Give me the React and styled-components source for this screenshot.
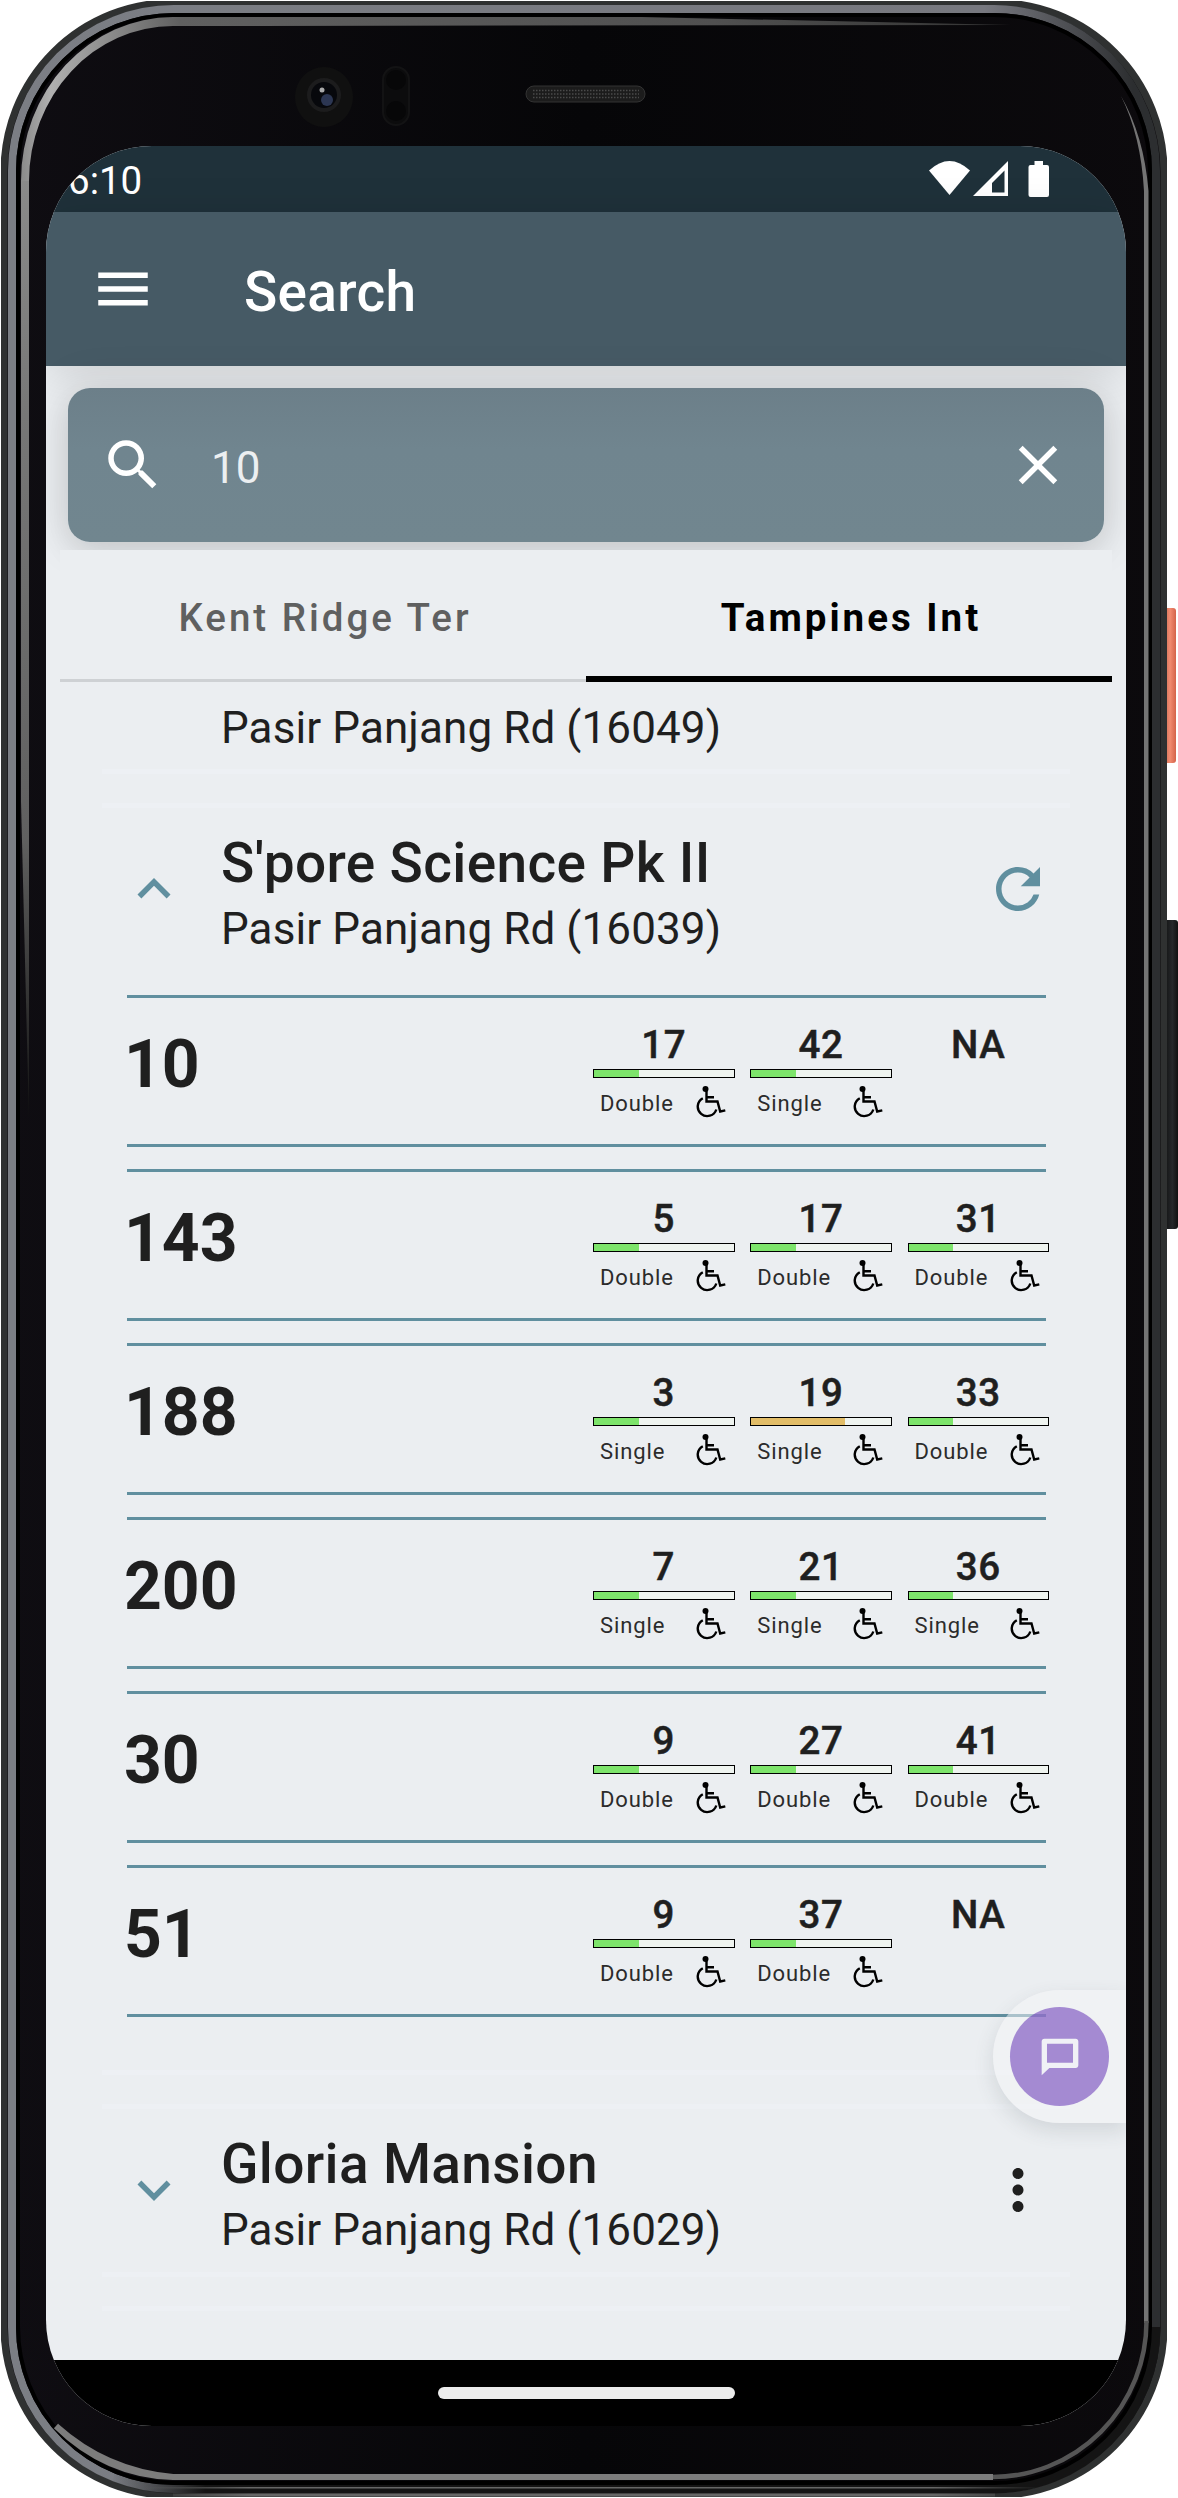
import React from "react";
import styled, { createGlobalStyle } from "styled-components";

const Global = createGlobalStyle`
  * { box-sizing: border-box; }
  body { margin: 0; background: #fff; font-family: Roboto, "Liberation Sans", sans-serif; color: #1f1f1f; }
  svg { display: block; flex: none; }
`;

const Stage = styled.div`
  position: relative;
  width: 1178px;
  height: 2498px;
  padding: 1px;
  overflow: hidden;
`;

const SideKey = styled.div`
  position: absolute;
  left: ${(p) => p.$x}px;
  top: ${(p) => p.$y}px;
  width: ${(p) => p.$w}px;
  height: ${(p) => p.$h}px;
  border-radius: 0 3px 3px 0;
  background: ${(p) => p.$fill};
`;

const Shell = styled.div`
  position: relative;
  width: 1166px;
  height: 2496px;
  padding: 145px 41px 71px 45px;
  border-radius: 172px;
  background: linear-gradient(90deg, #0f0d12, #060608 50%, #0c0a0d);
`;

const Rims = styled.svg`
  position: absolute;
  inset: 0;
`;

const Screen = styled.div`
  position: relative;
  width: 1080px;
  height: 2280px;
  border-radius: 106px;
  overflow: hidden;
  display: flex;
  flex-direction: column;
  background: #ebeef1;
`;

const StatusBar = styled.div`
  flex: none;
  height: 66px;
  padding: 0 75px 0 22px;
  display: flex;
  align-items: center;
  background: #1f313a;
  color: #fff;
  font-size: 38.5px;
`;

const Clock = styled.span`
  flex: 1;
  line-height: 64px;
  padding-top: 4px;
`;

const AppBar = styled.header`
  flex: none;
  height: 154px;
  padding-left: 44px;
  display: flex;
  align-items: center;
  gap: 88px;
  background: #465a65;
  color: #fff;
  box-shadow: 0 4px 40px rgba(0, 0, 0, 0.12);
`;

const AppTitle = styled.h1`
  margin: 0;
  padding-top: 5px;
  font-size: 55px;
  font-weight: 500;
  line-height: 64px;
  letter-spacing: 0.3px;
`;

const SearchZone = styled.div`
  flex: none;
  height: 184px;
  padding: 22px 22px 0;
`;

const SearchBox = styled.div`
  height: 154px;
  border-radius: 22px;
  padding: 0 33px 0 32px;
  display: flex;
  align-items: center;
  background: linear-gradient(#6c7f89, #70858f 40%, #71868f);
  box-shadow: 0 0 44px 2px rgba(0, 0, 0, 0.13), 0 14px 30px rgba(0, 0, 0, 0.07);
  color: #fff;
`;

const Query = styled.span`
  flex: 1;
  margin-left: 45px;
  padding-top: 6px;
  font-size: 44px;
  color: #eceff1;
`;

const Tabs = styled.div`
  position: relative;
  flex: none;
  height: 132px;
  margin: 0 14px;
  display: flex;
  background: #ebeef1;
`;

const Tab = styled.div`
  flex: 1;
  padding: 43px 0 0 4px;
  text-align: center;
  font-size: 38.5px;
  line-height: 50px;
  font-weight: ${(p) => (p.$active ? 700 : 500)};
  letter-spacing: 3px;
  color: ${(p) => (p.$active ? "#000" : "#5f6060")};
  border-bottom: ${(p) => (p.$active ? "6px solid #000" : "3px solid #ced1d4")};
`;

const Content = styled.main`
  flex: 1;
  min-height: 0;
  overflow: hidden;
  padding: 0 56px;
`;

const Item = styled.section`
  height: ${(p) => p.$h}px;
  margin-bottom: 29px;
  padding-top: ${(p) => p.$top || 0}px;
  border-top: ${(p) => (p.$first ? 0 : 5)}px solid #edf0f4;
  border-bottom: 5px solid #edf0f4;
`;

const StopHead = styled.div`
  display: flex;
  align-items: flex-start;
  padding: 0 19px;

  > svg {
    margin-top: 27px;
  }
`;

const StopText = styled.div`
  flex: 1;
  margin: 1px 0 0 34px;
`;

const StopName = styled.h2`
  margin: 0 0 2px;
  font-size: 55px;
  line-height: 66px;
  font-weight: 500;
  letter-spacing: 0.35px;
  white-space: nowrap;
`;

const StopRoad = styled.div`
  font-size: 44px;
  line-height: 62px;
  letter-spacing: 0.1px;
  white-space: nowrap;
  padding-left: ${(p) => (p.$indent ? 119 : 0)}px;
`;

const Services = styled.div`
  display: flex;
  flex-direction: column;
  gap: 22px;
  margin: 35px 24px 0 25px;
`;

const Service = styled.div`
  height: 152px;
  border-top: 3px solid #608f9f;
  border-bottom: 3px solid #608f9f;
  display: flex;
`;

const BusNo = styled.div`
  width: 469px;
  flex: none;
  margin-left: -3px;
  padding-top: 27px;
  font-size: 66px;
  line-height: 80px;
  font-weight: 700;
`;

const Arrivals = styled.div`
  display: flex;
  gap: 15.75px;
`;

const Arrival = styled.div`
  width: 141.5px;
  flex: none;
`;

const Minutes = styled.div`
  padding-top: 24px;
  height: 71px;
  text-align: center;
  font-size: 38.5px;
  line-height: 46px;
  font-weight: 500;
  letter-spacing: 0.6px;
  -webkit-text-stroke: 0.5px currentColor;
`;

const LoadBar = styled.div`
  height: 9px;
  border: 1px solid #000;
  background: #eff4f0;
`;

const LoadFill = styled.div`
  height: 100%;
  background: ${(p) => p.$color};
`;

const BusInfo = styled.div`
  display: flex;
  align-items: flex-start;
  justify-content: space-between;
  padding: 8px 9px 0 7px;
  font-size: 22px;
  letter-spacing: 0.9px;
  line-height: 35px;
  color: #2b2b2b;
`;

const Chat = styled.div`
  position: absolute;
  right: 0;
  top: 1844px;
  width: 133px;
  height: 133px;
  padding: 17px;
  border-radius: 67px 0 0 67px;
  background: rgba(245, 245, 247, 0.5);
  box-shadow: 0 8px 20px rgba(60, 70, 80, 0.14);
`;

const ChatButton = styled.div`
  width: 99px;
  height: 99px;
  border-radius: 50%;
  display: grid;
  place-items: center;
  background: rgba(108, 62, 186, 0.58);
`;

const NavBar = styled.div`
  flex: none;
  height: 66px;
  display: flex;
  justify-content: center;
  padding-top: 27px;
  background: #000;
`;

const HomePill = styled.div`
  width: 297px;
  height: 12px;
  border-radius: 6px;
  background: #ececec;
`;

const MenuIcon = () => (
  <svg width="66" height="66" viewBox="0 0 24 24" fill="#fff">
    <path d="M3 18h18v-2H3v2zm0-5h18v-2H3v2zm0-7v2h18V6H3z" />
  </svg>
);
const SearchIcon = () => (
  <svg width="66" height="66" viewBox="0 0 24 24" fill="#fff">
    <path d="M15.5 14h-.79l-.28-.27A6.47 6.47 0 0 0 16 9.5 6.5 6.5 0 1 0 9.5 16c1.61 0 3.09-.59 4.23-1.57l.27.28v.79l5 4.99L20.49 19l-4.99-5zm-6 0C7.01 14 5 11.99 5 9.5S7.01 5 9.5 5 14 7.01 14 9.5 11.99 14 9.5 14z" />
  </svg>
);
const CloseIcon = () => (
  <svg width="66" height="66" viewBox="0 0 24 24" fill="#fff">
    <path d="M19 6.41L17.59 5 12 10.59 6.41 5 5 6.41 10.59 12 5 17.59 6.41 19 12 13.41 17.59 19 19 17.59 13.41 12z" />
  </svg>
);
const Chevron = ({ up }) => (
  <svg width="66" height="66" viewBox="0 0 24 24" fill="#608f9f">
    {up ? (
      <path d="M12 8l-6 6 1.41 1.41L12 10.83l4.59 4.58L18 14z" />
    ) : (
      <path d="M16.59 8.59L12 13.17 7.41 8.59 6 10l6 6 6-6z" />
    )}
  </svg>
);
const RefreshIcon = () => (
  <svg width="66" height="66" viewBox="0 0 24 24" fill="#608f9f">
    <path d="M17.65 6.35A7.958 7.958 0 0 0 12 4c-4.42 0-7.99 3.58-7.99 8s3.57 8 7.99 8c3.73 0 6.84-2.55 7.73-6h-2.08A5.99 5.99 0 0 1 12 18c-3.31 0-6-2.69-6-6s2.69-6 6-6c1.66 0 3.14.69 4.22 1.78L13 11h7V4l-2.35 2.35z" />
  </svg>
);
const MoreIcon = () => (
  <svg width="66" height="66" viewBox="0 0 24 24" fill="#1f1f1f">
    <path d="M12 8c1.1 0 2-.9 2-2s-.9-2-2-2-2 .9-2 2 .9 2 2 2zm0 2c-1.1 0-2 .9-2 2s.9 2 2 2 2-.9 2-2-.9-2-2-2zm0 6c-1.1 0-2 .9-2 2s.9 2 2 2 2-.9 2-2-.9-2-2-2z" />
  </svg>
);
const ChatIcon = () => (
  <svg width="44" height="44" viewBox="0 0 24 24" fill="#f0f1f6">
    <path fillRule="evenodd" d="M20.500 2H3.500C2.600 2 2 2.700 2 3.500V22l4.200-4H20.500c.9 0 1.500-.7 1.500-1.500v-13C22 2.700 21.400 2 20.500 2zM4.900 4.800H19.100V15.200H4.900z" />
  </svg>
);
const Wheelchair = () => (
  <svg width="30" height="32" viewBox="0 0 30 32" fill="none" stroke="#000" strokeWidth="2.400">
    <circle cx="9.500" cy="3" r="3" fill="#000" stroke="none" />
    <path d="M10.500 4V15.500H21.500L24.200 25.500 29.300 24.300M10.500 11.200H18" />
    <path d="M6.800 12.200A9.500 9.500 0 1 0 20.300 23.500" />
  </svg>
);
const StatusIcons = () => (
  <svg width="122" height="42" viewBox="0 0 122 42" fill="#fff">
    <path d="M0 12.500Q20.500-6.500 41 12.500L20.500 37z" />
    <path fillRule="evenodd" d="M44 38L79 3V38zM63 34.500H75.500V12.500L63 25z" />
    <path d="M105.500 3h8.500v4h4q2 0 2 2v28q0 2-2 2h-16.500q-2 0-2-2V9q0-2 2-2h4z" />
  </svg>
);

const LOADS = {
  low: { color: "#7de46b", width: "32%" },
  mid: { color: "#e2bd68", width: "67%" },
};

const SERVICES = [
  ["10", [[17, "Double"], [42, "Single"], null]],
  ["143", [[5, "Double"], [17, "Double"], [31, "Double"]]],
  ["188", [[3, "Single"], [19, "Single", "mid"], [33, "Double"]]],
  ["200", [[7, "Single"], [21, "Single"], [36, "Single"]]],
  ["30", [[9, "Double"], [27, "Double"], [41, "Double"]]],
  ["51", [[9, "Double"], [37, "Double"], null]],
];

function ArrivalCell({ bus }) {
  if (!bus) return <Arrival><Minutes>NA</Minutes></Arrival>;
  const [mins, deck, load = "low"] = bus;
  return (
    <Arrival>
      <Minutes>{mins}</Minutes>
      <LoadBar>
        <LoadFill $color={LOADS[load].color} style={{ width: LOADS[load].width }} />
      </LoadBar>
      <BusInfo>
        <span>{deck}</span>
        <Wheelchair />
      </BusInfo>
    </Arrival>
  );
}

function PhoneRims() {
  return (
    <Rims width="1166" height="2496" viewBox="0 0 1166 2496" fill="none">
      <defs>
        <linearGradient id="metal" x1="0" y1="0" x2="1" y2="0">
          <stop offset="0" stopColor="#7b7e84" />
          <stop offset="0.85" stopColor="#77787f" />
          <stop offset="0.98" stopColor="#2c2e30" />
        </linearGradient>
        <linearGradient id="glass" gradientUnits="userSpaceOnUse" x1="20" y1="0" x2="1010" y2="0">
          <stop offset="0" stopColor="#8a8a8a" />
          <stop offset="0.03" stopColor="#b0b0b0" />
          <stop offset="0.16" stopColor="#606060" />
          <stop offset="0.7" stopColor="#505050" />
          <stop offset="1" stopColor="#333" />
        </linearGradient>
        <linearGradient id="edge" x1="0" y1="0" x2="0" y2="1">
          <stop offset="0" stopColor="#8a8a8a" />
          <stop offset="0.25" stopColor="#777" />
          <stop offset="0.7" stopColor="#606060" />
          <stop offset="1" stopColor="#111" />
        </linearGradient>
        <linearGradient id="base" gradientUnits="userSpaceOnUse" x1="110" y1="0" x2="1056" y2="0">
          <stop offset="0" stopColor="#141414" stopOpacity="0" />
          <stop offset="0.1" stopColor="#141414" />
          <stop offset="1" stopColor="#141414" />
        </linearGradient>
        <linearGradient id="shine" gradientUnits="userSpaceOnUse" x1="140" y1="0" x2="1040" y2="0">
          <stop offset="0" stopColor="#666" stopOpacity="0" />
          <stop offset="0.12" stopColor="#666" />
          <stop offset="0.88" stopColor="#666" />
          <stop offset="1" stopColor="#666" stopOpacity="0" />
        </linearGradient>
      </defs>
      <rect x="3" y="1.500" width="1160" height="2493" rx="169" stroke="#2f3131" strokeWidth="7" />
      <rect x="11" y="8" width="1144" height="2480" rx="162" stroke="url(#metal)" strokeWidth="8" />
      <path d="M112 2477Q140 2487.500 173 2488H993A162 162 0 0 0 1155 2326" stroke="url(#base)" strokeWidth="9" />
      <path d="M140 2486H1040V2487.500H140Z" fill="url(#shine)" />
      <path d="M172 2492.500H994V2495.500H172Z" fill="url(#shine)" />
      <rect x="17" y="14" width="1132" height="2468" rx="156" stroke="#000" strokeWidth="4" />
      <path d="M20 180A152 164 0 0 1 172 16H640L1010 24 172 25A144 155 0 0 0 28 180Z" fill="url(#glass)" />
      <path d="M20 180H28V1120L25 1000 20 800Z" fill="url(#edge)" />
      <path d="M1120 95Q1143 135 1147.500 190V2322H1143V190Q1140 135 1120 95Z" fill="#747474" />
      <path d="M1145.500 2320A154 156 0 0 1 990 2476" stroke="#555" strokeWidth="4.500" />
      <path d="M992 2476H172Q105 2474 55 2425 105 2470 172 2476" stroke="#7c7c7c" strokeWidth="6" />
      <g>
        <ellipse cx="323" cy="96" rx="29" ry="30" fill="#101010" />
        <circle cx="323" cy="94" r="17" fill="#1c1c1d" />
        <circle cx="323" cy="94" r="13" fill="#07080c" />
        <circle cx="326" cy="99" r="6" fill="#2c3652" />
        <circle cx="321" cy="89" r="2.500" fill="#aaa" />
        <rect x="382" y="66" width="26" height="58" rx="13" fill="#0c0c0d" stroke="#131314" strokeWidth="2" />
        <circle cx="395" cy="79" r="10" fill="#070708" />
        <circle cx="395" cy="110" r="10" fill="#070708" />
        <rect x="525" y="85" width="119" height="16" rx="8" fill="#1c1c1c" stroke="#333" strokeWidth="1" />
        <path d="M532 89.500H638M532 93H638M532 96.500H638" stroke="#4a4a4a" strokeWidth="1.500" strokeDasharray="1.500 1.500" />
      </g>
    </Rims>
  );
}

export default function App() {
  return (
    <Stage>
      <Global />
      <SideKey $x={1164} $y={608} $w={12} $h={155} $fill="linear-gradient(90deg, #c96c53, #f28b70 50%, #d4634a)" />
      <SideKey $x={1164} $y={920} $w={14} $h={309} $fill="linear-gradient(90deg, #101112, #26282a 60%, #111)" />
      <Shell>
        <PhoneRims />
        <Screen>
          <StatusBar>
            <Clock>6:10</Clock>
            <StatusIcons />
          </StatusBar>
          <AppBar>
            <MenuIcon />
            <AppTitle>Search</AppTitle>
          </AppBar>
          <SearchZone>
            <SearchBox>
              <SearchIcon />
              <Query>10</Query>
              <CloseIcon />
            </SearchBox>
          </SearchZone>
          <Tabs>
            <Tab>Kent Ridge Ter</Tab>
            <Tab $active>Tampines Int</Tab>
          </Tabs>
          <Content>
            <Item $first $top={15} $h={92}>
              <StopRoad $indent>Pasir Panjang Rd (16049)</StopRoad>
            </Item>
            <Item $top={21} $h={1272}>
              <StopHead>
                <Chevron up />
                <StopText>
                  <StopName>S'pore Science Pk II</StopName>
                  <StopRoad>Pasir Panjang Rd (16039)</StopRoad>
                </StopText>
                <RefreshIcon />
              </StopHead>
              <Services>
                {SERVICES.map(([no, buses]) => (
                  <Service key={no}>
                    <BusNo>{no}</BusNo>
                    <Arrivals>
                      {buses.map((b, i) => <ArrivalCell key={i} bus={b} />)}
                    </Arrivals>
                  </Service>
                ))}
              </Services>
            </Item>
            <Item $top={21} $h={173}>
              <StopHead>
                <Chevron />
                <StopText>
                  <StopName>Gloria Mansion</StopName>
                  <StopRoad>Pasir Panjang Rd (16029)</StopRoad>
                </StopText>
                <MoreIcon />
              </StopHead>
            </Item>
            <Item $h={173} />
          </Content>
          <NavBar>
            <HomePill />
          </NavBar>
          <Chat>
            <ChatButton>
              <ChatIcon />
            </ChatButton>
          </Chat>
        </Screen>
      </Shell>
    </Stage>
  );
}
